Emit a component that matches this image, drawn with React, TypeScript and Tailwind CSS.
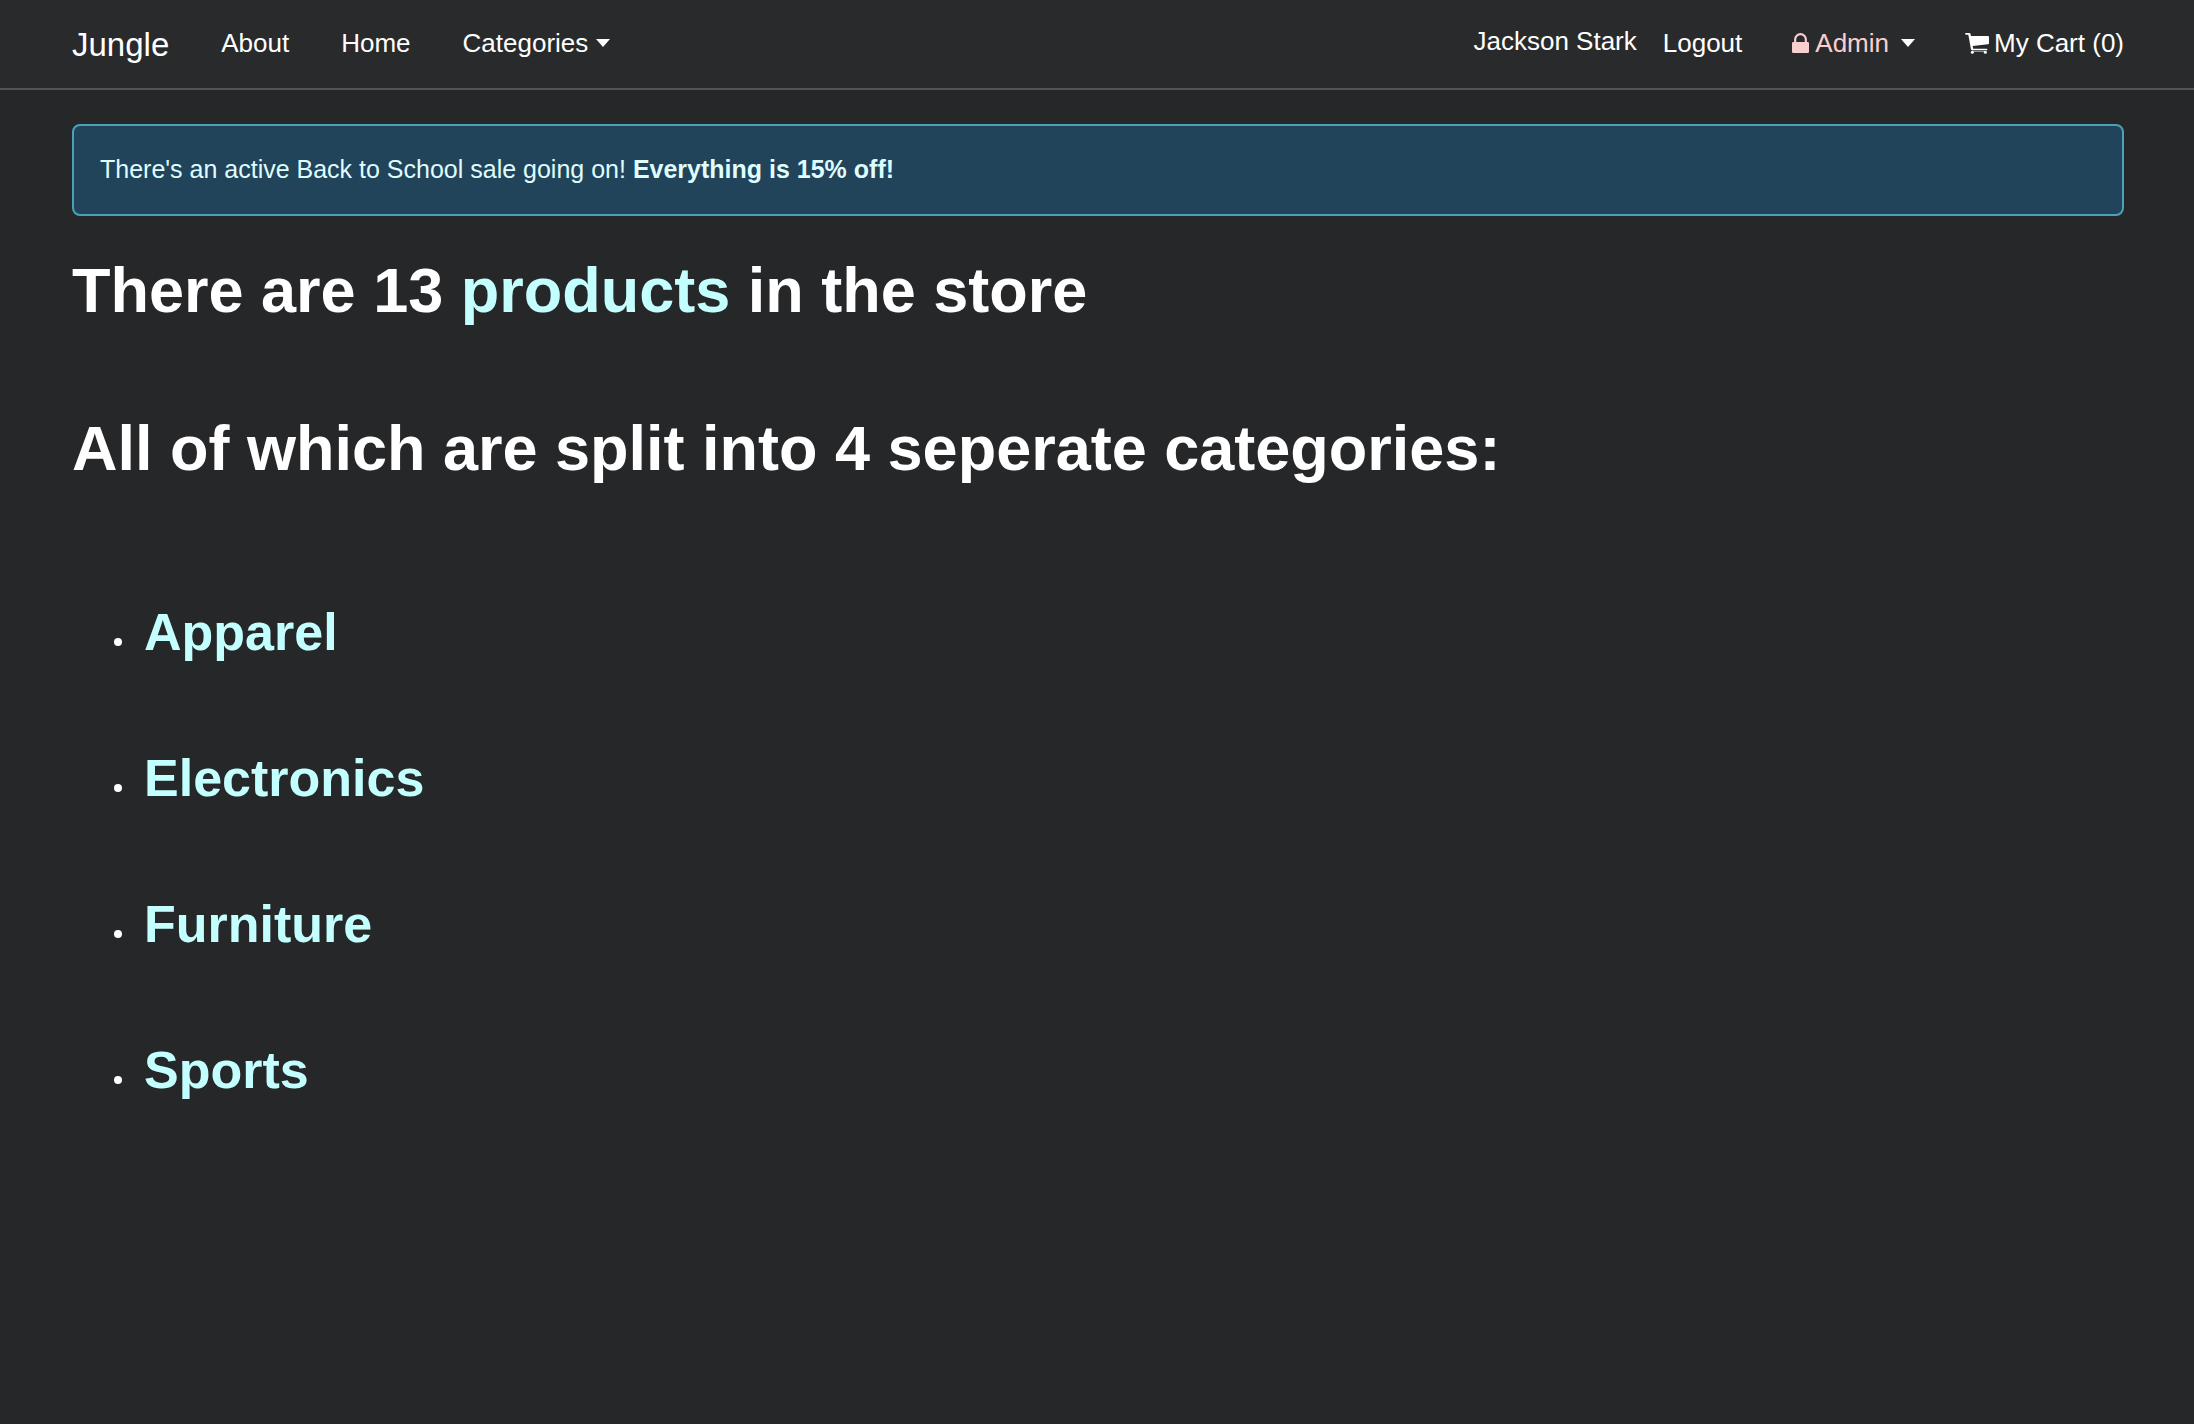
import type { ReactNode } from "react";

const categories = ["Apparel", "Electronics", "Furniture", "Sports"];

function LockIcon() {
  return (
    <svg viewBox="0 0 51 60" className="h-[20px] w-[17px]" fill="currentColor" aria-hidden="true">
      <rect x="0" y="27" width="51" height="33" rx="4" />
      <path d="M9.500 30V19a16 15.500 0 0 1 32 0v11" fill="none" stroke="currentColor" strokeWidth="6.500" />
    </svg>
  );
}

function CartIcon() {
  return (
    <svg viewBox="0 0 72 63" className="h-[21px] w-[24px]" fill="currentColor" aria-hidden="true">
      <path d="M0 0h13c2 0 3 1 3.500 3L18 9h51c2 0 3 1 3 3v19c0 2-1 3-3 3L23 39l1.500 8H65c3 0 3 5 0 5H21c-1.500 0-2.500-1-3-2.500L10 5H2z" />
      <path d="M20 55h44v1.500H20z" />
      <circle cx="22" cy="58" r="4.500" />
      <circle cx="61" cy="58" r="4.500" />
    </svg>
  );
}

function Caret() {
  return (
    <svg viewBox="0 0 14 8" className="h-[8px] w-[14px] text-white" fill="currentColor" aria-hidden="true">
      <path d="M0 0h14L7 8z" />
    </svg>
  );
}

function NavLink({ children }: { children: ReactNode }) {
  return (
    <a href="#" className="flex items-center text-[26px] leading-[42px] whitespace-nowrap">
      {children}
    </a>
  );
}

export default function App() {
  return (
    <div className="min-h-screen bg-[#262729] font-['Liberation_Sans',Arial,sans-serif] text-white">
      <header className="flex items-start justify-between border-b-2 border-[#515355] bg-[#292a2c] pt-[22px] pr-[70px] pb-[20px] pl-[72px]">
        <nav className="flex items-start gap-[52px]" aria-label="Main">
          <a href="#" className="text-[33px] leading-[46px]">
            Jungle
          </a>
          <NavLink>About</NavLink>
          <NavLink>Home</NavLink>
          <button type="button" className="flex items-center gap-[8px] text-[26px] leading-[42px]">
            Categories
            <Caret />
          </button>
        </nav>
        <nav className="flex items-start gap-[50px]" aria-label="Account">
          <div className="flex items-start gap-[26px]">
            <span className="text-[26px] leading-[38px] whitespace-nowrap">Jackson Stark</span>
            <NavLink>Logout</NavLink>
          </div>
          <button type="button" className="flex items-center gap-[12px] text-[26px] leading-[42px] text-[#f9d0ce]">
            <span className="flex items-center gap-[6px]">
              <LockIcon />
              Admin
            </span>
            <Caret />
          </button>
          <NavLink>
            <span className="flex items-center gap-[5px]">
              <CartIcon />
              My Cart (0)
            </span>
          </NavLink>
        </nav>
      </header>

      <main className="pt-[34px] pr-[70px] pl-[72px]">
        <div
          role="alert"
          className="rounded-[8px] border-2 border-[#4ca0b8] bg-[#22445a] px-[26px] pt-[23px] pb-[25px] text-[25px] leading-[40px] text-[#dffdff]"
        >
          There's an active Back to School sale going on! <strong>Everything is 15% off!</strong>
        </div>

        <h1 className="mt-[39px] text-[63px] leading-[70px] font-bold">
          There are 13{" "}
          <a href="#" className="text-[#c4ffff]">
            products
          </a>{" "}
          in the store
        </h1>
        <h1 className="mt-[88px] text-[63px] leading-[70px] font-bold">
          All of which are split into 4 seperate categories:
        </h1>

        <ul className="mt-[120px] flex flex-col gap-[88px] pl-[42px]">
          {categories.map((name) => (
            <li key={name} className="flex items-start gap-[22px]">
              <span className="mt-[35px] size-[8px] rounded-full bg-white" />
              <h2 className="text-[52px] leading-[58px] font-bold">
                <a href="#" className="text-[#c4ffff]">
                  {name}
                </a>
              </h2>
            </li>
          ))}
        </ul>
      </main>
    </div>
  );
}
